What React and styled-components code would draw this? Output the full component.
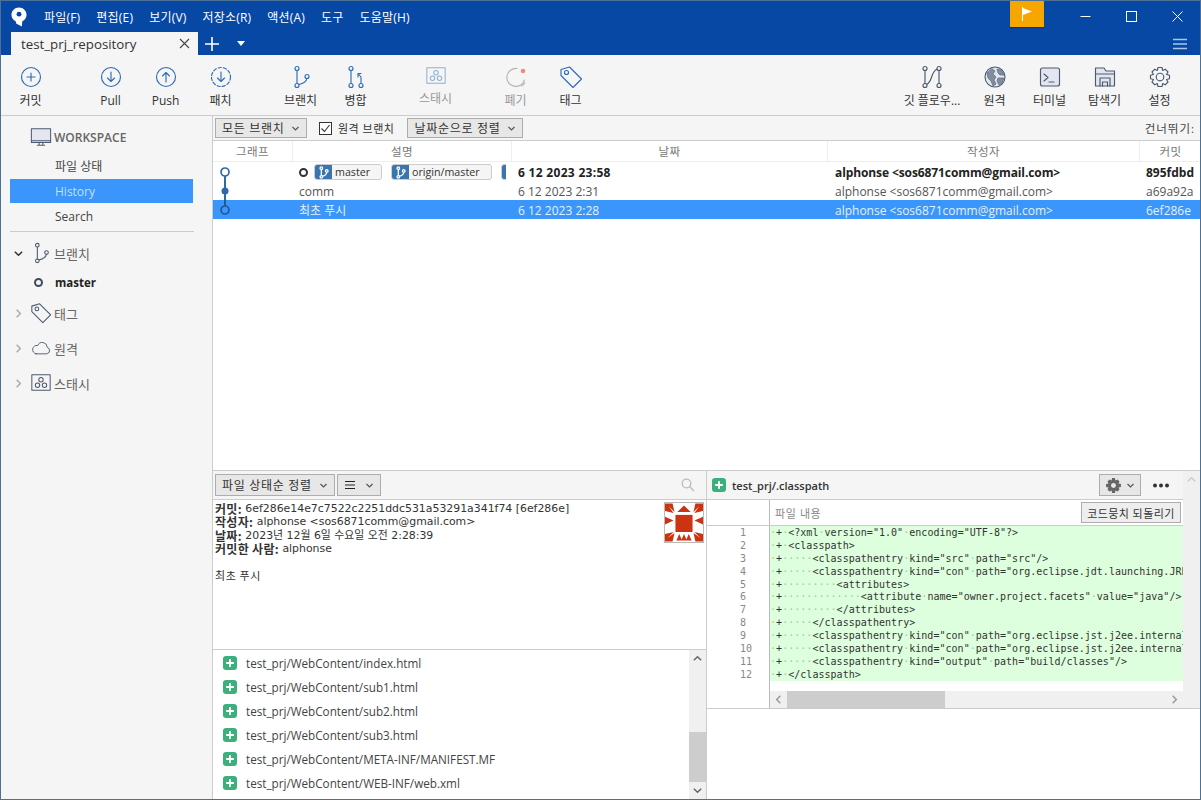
import React from 'react';
import styled, { createGlobalStyle } from 'styled-components';

const Global = createGlobalStyle`
  html, body { margin: 0; padding: 0; overflow: hidden; background: #fff; }
  * { box-sizing: border-box; }
  body {
    font-family: "Open Sans", "Noto Sans CJK KR", sans-serif;
    font-size: 12px;
    color: #333;
  }
`;

const blue = '#2f6db5';
const slate = '#4b5a70';
const pale = '#e3e6ee';

const Window = styled.div`
  width: 1201px;
  height: 800px;
  border: 1px solid #4c7096;
  display: flex;
  flex-direction: column;
  overflow: hidden;
  background: #f5f5f5;
`;

const TitleBar = styled.div`
  background: #0848a5;
  height: 54px;
  flex: none;
  display: flex;
  flex-direction: column;
`;

const MenuRow = styled.div`
  height: 31px;
  display: flex;
  align-items: center;
  padding-left: 10px;
`;

const Logo = styled.svg`
  width: 16px;
  height: 20px;
  margin-right: 17px;
`;

const Menu = styled.div`
  display: flex;
  gap: 16px;
  color: #fff;
  font-size: 12px;
  letter-spacing: .2px;
`;

const FlagBox = styled.div`
  width: 34px;
  height: 26px;
  margin-left: auto;
  margin-right: 18px;
  margin-top: -5px;
  background: #f7a600;
  display: flex;
  align-items: center;
  justify-content: center;
  box-shadow: 0 1px 1px rgba(0,0,0,.3);
`;

const WinBtns = styled.div`
  display: flex;
  width: 138px;
`;

const WinBtn = styled.div`
  width: 46px;
  height: 31px;
  display: flex;
  align-items: center;
  justify-content: center;
`;

const TabRow = styled.div`
  height: 23px;
  display: flex;
  align-items: stretch;
  padding-left: 10px;
`;

const Tab = styled.div`
  width: 187px;
  background: #f5f5f5;
  display: flex;
  align-items: center;
  justify-content: space-between;
  padding: 0 8px 0 10px;
  font-size: 13.3px;
  color: #333;
`;

const TabTool = styled.div`
  display: flex;
  align-items: center;
  justify-content: center;
  width: ${p => p.$w}px;
`;

const Hamburger = styled.div`
  margin-left: auto;
  display: flex;
  align-items: center;
  padding-right: 13px;
`;

const Toolbar = styled.div`
  height: 61px;
  flex: none;
  display: flex;
  border-bottom: 1px solid #ccc;
  padding-left: 2px;
  padding-right: 13px;
`;

const ToolItem = styled.div`
  width: ${p => p.$w || 55}px;
  margin-left: ${p => p.$ml || 0}px;
  display: flex;
  flex-direction: column;
  align-items: center;
  padding-top: 10px;
  color: ${p => (p.$off ? '#999' : '#333')};
  font-size: 12px;
  white-space: nowrap;
  svg { display: block; }
  span { margin-top: 4px; line-height: 16px; }
`;

const Spacer = styled.div`
  flex: 1;
`;

const Body = styled.div`
  flex: 1;
  display: flex;
  min-height: 0;
`;

const Sidebar = styled.div`
  width: 212px;
  flex: none;
  border-right: 1px solid #ccc;
  padding: 9px 17px 0 9px;
  background: #f5f5f5;
`;

const SectionHead = styled.div`
  height: 24px;
  margin-top: ${p => p.$mt || 0}px;
  margin-bottom: ${p => p.$mb || 0}px;
  display: flex;
  align-items: center;
  color: #666;
  font-size: ${p => p.$fs || 13}px;
  font-weight: ${p => p.$fw || 400};
`;

const Arrow = styled.div`
  width: 20px;
  flex: none;
  display: flex;
  justify-content: center;
  margin-left: -2px;
`;

const HeadIcon = styled.div`
  width: 26px;
  flex: none;
  display: flex;
  justify-content: center;
`;

const NavItem = styled.div`
  height: 24px;
  margin-bottom: 1px;
  margin-right: 2px;
  padding-left: 45px;
  display: flex;
  align-items: center;
  font-size: 12px;
  background: ${p => (p.$on ? '#3a96fb' : 'transparent')};
  color: ${p => (p.$on ? '#c5def8' : '#444')};
`;

const SideRule = styled.div`
  height: 1px;
  margin-top: 3px;
  margin-right: 1px;
  background: #ccc;
`;

const BranchItem = styled.div`
  height: 24px;
  margin-top: 5px;
  display: flex;
  align-items: center;
  padding-left: 24px;
  font-weight: 700;
  color: #222;
  font-size: 11.5px;
  gap: 12px;
`;

const Ring = styled.i`
  display: block;
  width: ${p => p.$s || 9}px;
  height: ${p => p.$s || 9}px;
  margin-right: ${p => p.$mr || 0}px;
  border-radius: 50%;
  border: 2px solid ${p => p.$c || '#3f4a5c'};
  background: transparent;
  flex: none;
`;

const Main = styled.div`
  flex: 1;
  min-width: 0;
  display: flex;
  flex-direction: column;
`;

const TopPanel = styled.div`
  height: 354px;
  flex: none;
  background: #fff;
  display: flex;
  flex-direction: column;
`;

const FilterBar = styled.div`
  height: 25px;
  flex: none;
  background: #f5f5f5;
  border-bottom: 1px solid #ccc;
  display: flex;
  align-items: center;
  padding: 0 5px 0 2px;
`;

const Drop = styled.div`
  height: ${p => p.$h || 20}px;
  width: ${p => p.$w}px;
  border: 1px solid #adadad;
  background: #e7e7e7;
  display: flex;
  align-items: center;
  justify-content: space-between;
  padding: 0 6px;
  font-size: 12px;
  letter-spacing: .7px;
  color: #333;
  white-space: nowrap;
`;

const CheckLabel = styled.label`
  display: flex;
  align-items: center;
  margin-left: 12px;
  margin-right: 13px;
  gap: 6px;
  font-size: 11px;
  letter-spacing: .5px;
`;

const CheckBox = styled.div`
  width: 13px;
  height: 13px;
  border: 1px solid #333;
  background: #fff;
  display: flex;
  align-items: center;
  justify-content: center;
`;

const SkipLabel = styled.div`
  margin-left: auto;
  font-size: 11.5px;
  letter-spacing: 1px;
  color: #444;
`;

const Columns = '80px 219px 316px 312px 61px';

const HeaderRow = styled.div`
  display: grid;
  grid-template-columns: ${Columns};
  height: 21px;
  flex: none;
  border-bottom: 1px solid #eee;
`;

const HeaderCell = styled.div`
  display: flex;
  align-items: center;
  justify-content: center;
  border-right: 1px solid #eee;
  color: #777;
  font-size: 11.5px;
  letter-spacing: .5px;
  &:last-child { border-right: 0; }
`;

const CommitRow = styled.div`
  display: grid;
  grid-template-columns: ${Columns};
  height: 19px;
  flex: none;
  align-items: center;
  font-size: 12px;
  font-weight: ${p => (p.$bold ? 700 : 400)};
  background: ${p => (p.$sel ? '#3a96fb' : 'transparent')};
  color: ${p => (p.$sel ? '#e4f0fd' : p.$bold ? '#222' : '#555')};
`;

const GraphCell = styled.svg`
  display: block;
  width: 80px;
  height: 19px;
`;

const DescCell = styled.div`
  display: flex;
  align-items: center;
  overflow: hidden;
  height: 19px;
  padding-left: 6px;
  padding-top: 1px;
  margin-right: 6px;
  white-space: nowrap;
`;

const Chip = styled.div`
  height: 16px;
  width: ${p => p.$w}px;
  margin-left: ${p => p.$ml || 0}px;
  flex: none;
  display: flex;
  align-items: center;
  border: 1px solid #ccc;
  border-radius: 3px;
  background: #f5f5f5;
  overflow: hidden;
  font-size: 10.7px;
  font-weight: 400;
  color: #333;
`;

const ChipIcon = styled.div`
  width: 18px;
  height: 16px;
  margin-left: -1px;
  background: #3a75b0;
  display: flex;
  align-items: center;
  justify-content: center;
  flex: none;
  margin-right: 3px;
`;

const TextCell = styled.div`
  padding-left: ${p => p.$pl || 6}px;
  padding-top: 1px;
  letter-spacing: ${p => p.$ls || 0}px;
  white-space: nowrap;
  overflow: hidden;
`;

const BottomPanel = styled.div`
  flex: 1;
  min-height: 0;
  display: flex;
  border-top: 1px solid #ccc;
`;

const LeftPane = styled.div`
  width: 494px;
  flex: none;
  border-right: 1px solid #ccc;
  display: flex;
  flex-direction: column;
  background: #fff;
`;

const PaneBar = styled.div`
  height: 29px;
  flex: none;
  display: flex;
  align-items: center;
  padding: 0 11px 0 2px;
  gap: 2px;
  background: #f5f5f5;
  border-bottom: 1px solid #ccc;
`;

const SearchIcon = styled.div`
  margin-left: auto;
  display: flex;
`;

const Details = styled.div`
  height: 150px;
  flex: none;
  border-bottom: 1px solid #ccc;
  padding: 2px 2px 0 2px;
  display: flex;
  justify-content: space-between;
  align-items: flex-start;
  font-family: "DejaVu Sans", "Noto Sans CJK KR", sans-serif;
  font-size: 10.9px;
  color: #333;
`;

const DetailLine = styled.div`
  height: 13.4px;
  line-height: 13.4px;
  white-space: nowrap;
  b {
    display: inline-block;
    height: 13.4px;
    line-height: 13.4px;
    vertical-align: top;
    font-weight: 700;
    font-family: "Noto Sans CJK KR", sans-serif;
    font-size: 12px;
    letter-spacing: .3px;
  }
`;

const DetailMsg = styled.div`
  margin-top: 13.4px;
  line-height: 13.4px;
  font-family: "Noto Sans CJK KR", sans-serif;
  font-size: 11px;
  letter-spacing: .6px;
`;

const Avatar = styled.svg`
  display: block;
  width: 40px;
  height: 41px;
  flex: none;
  border: 1px solid #bbb;
`;

const FileArea = styled.div`
  flex: 1;
  min-height: 0;
  display: flex;
`;

const FileList = styled.div`
  flex: 1;
  padding-top: 1px;
`;

const FileRow = styled.div`
  height: 24px;
  display: flex;
  align-items: center;
  padding-left: 10px;
  gap: 9px;
  font-size: 11.7px;
  color: #444;
`;

const AddIcon = styled.svg`
  display: block;
  width: 14px;
  height: 14px;
  flex: none;
`;

const VBar = styled.div`
  width: 17px;
  flex: none;
  background: #f0f0f0;
  display: flex;
  flex-direction: column;
  align-items: center;
`;

const VArrow = styled.div`
  height: 17px;
  flex: none;
  display: flex;
  align-items: center;
  justify-content: center;
`;

const VTrack = styled.div`
  flex: 1;
  width: 100%;
  display: flex;
  flex-direction: column;
  justify-content: flex-end;
`;

const VThumb = styled.div`
  height: 50px;
  background: #cdcdcd;
`;

const RightPane = styled.div`
  flex: 1;
  min-width: 0;
  display: flex;
  flex-direction: column;
  background: #fff;
`;

const DiffBlock = styled.div`
  height: 238px;
  flex: none;
  border-bottom: 1px solid #ccc;
  display: flex;
`;

const DiffMain = styled.div`
  flex: 1;
  min-width: 0;
  display: flex;
  flex-direction: column;
`;

const DiffHead = styled.div`
  height: 29px;
  flex: none;
  display: flex;
  align-items: center;
  padding-left: 5px;
  background: #f5f5f5;
  border-bottom: 1px solid #ccc;
  font-weight: 600;
  font-size: 11px;
  color: #333;
  gap: 6px;
`;

const HeadTools = styled.div`
  margin-left: auto;
  display: flex;
  align-items: center;
  margin-right: 13px;
  gap: 11px;
`;

const GearBtn = styled.div`
  width: 42px;
  height: 22px;
  border: 1px solid #adadad;
  background: #e7e7e7;
  display: flex;
  align-items: center;
  justify-content: center;
  gap: 4px;
`;

const HunkRow = styled.div`
  height: 26px;
  flex: none;
  display: flex;
  align-items: center;
  justify-content: space-between;
  padding-right: 2px;
  border-bottom: 1px solid #ccc;
`;

const HunkTitle = styled.div`
  margin-left: 62px;
  padding-left: 5px;
  height: 100%;
  flex: 1;
  display: flex;
  align-items: center;
  border-left: 1px solid #bbb;
  color: #888;
  font-size: 11px;
  letter-spacing: .6px;
`;

const HunkBtn = styled.div`
  width: 100px;
  height: 21px;
  border: 1px solid #adadad;
  background: #eee;
  display: flex;
  align-items: center;
  justify-content: center;
  font-size: 11px;
  letter-spacing: .4px;
`;

const CodeArea = styled.div`
  flex: 1;
  min-height: 0;
  display: flex;
  font-family: "DejaVu Sans Mono", "Liberation Mono", monospace;
  font-size: 10px;
`;

const Gutter = styled.div`
  width: 63px;
  flex: none;
  border-right: 1px solid #bbb;
  padding: 0 0 0 33px;
  color: #888;
`;

const GutterNum = styled.div`
  height: 12.9px;
  line-height: 13px;
`;

const CodeCol = styled.div`
  flex: 1;
  min-width: 0;
  display: flex;
  flex-direction: column;
  overflow: hidden;
`;

const CodeLines = styled.div`
  flex: 1;
`;

const CodeLine = styled.div`
  height: 12.9px;
  line-height: 13px;
  background: #ddffdd;
  white-space: pre;
  overflow: hidden;
  letter-spacing: .03px;
  color: #333;
`;

const Dot = styled.span`
  color: #9fc99f;
`;

const HBar = styled.div`
  height: 17px;
  flex: none;
  background: #f0f0f0;
  display: flex;
  align-items: center;
`;

const HArrow = styled.div`
  width: 17px;
  flex: none;
  display: flex;
  justify-content: center;
`;

const HThumb = styled.div`
  width: 158px;
  height: 17px;
  background: #cdcdcd;
`;

const PaneFill = styled.div`
  flex: 1;
`;

const Icon = ({ size = 24, children, color = blue, sw = 1.15 }) => (
  <svg width={size} height={size} viewBox="0 0 24 24" fill="none" stroke={color} strokeWidth={sw} strokeLinecap="round" strokeLinejoin="round">
    {children}
  </svg>
);

const Chev = ({ dir = 'down', color = '#555', s = 9 }) => {
  const d = {
    down: 'M1.5 3 L4.5 6 L7.5 3',
    up: 'M1.5 6 L4.5 3 L7.5 6',
    right: 'M3 1.5 L6 4.5 L3 7.5',
    left: 'M6 1.5 L3 4.5 L6 7.5',
  }[dir];
  return (
    <svg width={s} height={s} viewBox="0 0 9 9" fill="none" stroke={color} strokeWidth="1.2">
      <path d={d} />
    </svg>
  );
};

const BranchGlyph = ({ color = blue, size = 24 }) => (
  <Icon size={size} color={color}>
    <circle cx="8" cy="3.5" r="2" />
    <circle cx="8" cy="20.5" r="2" />
    <circle cx="18" cy="11.5" r="2" />
    <path d="M8 5.5V18.5M9.8 19.5C14 18.5 17.5 17 17.8 13.5" />
  </Icon>
);

const TagGlyph = ({ color = blue, size = 24 }) => (
  <Icon size={size} color={color}>
    <path d="M2 4.5 L10.5 2 L22.5 14 L14 22.5 L2 10.5 Z" />
    <circle cx="7.5" cy="7.5" r="2" />
  </Icon>
);

const StashGlyph = ({ color = slate, size = 22 }) => (
  <Icon size={size} color={color} sw={1.1}>
    <rect x="2" y="3" width="20" height="17" />
    <circle cx="12" cy="8.5" r="2.4" />
    <circle cx="8.2" cy="14.5" r="2.4" />
    <circle cx="15.8" cy="14.5" r="2.4" />
  </Icon>
);

const AddBadge = () => (
  <AddIcon viewBox="0 0 14 14">
    <rect width="14" height="14" rx="3" fill="#3cb07c" />
    <path d="M7 3.2V10.8M3.2 7H10.8" stroke="#fff" strokeWidth="2" />
  </AddIcon>
);

const ChipBranch = () => (
  <svg width="13" height="13" viewBox="0 0 24 24" fill="none" stroke="#fff" strokeWidth="2.4">
    <circle cx="8" cy="4" r="2.4" />
    <circle cx="8" cy="20" r="2.4" />
    <circle cx="18" cy="9" r="2.4" />
    <path d="M8 6.5V17.5M10 18.5C15 18 17.5 15 18 11.5" />
  </svg>
);

const CommitGraph = ({ top, bottom, kind, line }) => (
  <GraphCell viewBox="0 0 80 19">
    {top && <path d="M12 0V10" stroke={line} strokeWidth="2" />}
    {bottom && <path d="M12 10V19" stroke={line} strokeWidth="2" />}
    {kind === 'dot' ? (
      <circle cx="12" cy="10" r="3.5" fill="#2f6aa8" />
    ) : (
      <circle cx="12" cy="10" r="4" fill={kind === 'sel' ? '#3a96fb' : '#fff'} stroke={kind === 'sel' ? '#1e5a96' : '#2f6aa8'} strokeWidth="1.7" />
    )}
  </GraphCell>
);

const menus = ['파일(F)', '편집(E)', '보기(V)', '저장소(R)', '액션(A)', '도구', '도움말(H)'];
const headers = ['그래프', '설명', '날짜', '작성자', '커밋'];
const author = 'alphonse <sos6871comm@gmail.com>';
const files = ['index.html', 'sub1.html', 'sub2.html', 'sub3.html', 'META-INF/MANIFEST.MF', 'WEB-INF/web.xml'];

const codeLines = [
  '·+·<?xml·version="1.0"·encoding="UTF-8"?>',
  '·+·<classpath>',
  '·+·····<classpathentry·kind="src"·path="src"/>',
  '·+·····<classpathentry·kind="con"·path="org.eclipse.jdt.launching.JRE_CONTAINER',
  '·+·········<attributes>',
  '·+·············<attribute·name="owner.project.facets"·value="java"/>',
  '·+·········</attributes>',
  '·+·····</classpathentry>',
  '·+·····<classpathentry·kind="con"·path="org.eclipse.jst.j2ee.internal.web.container',
  '·+·····<classpathentry·kind="con"·path="org.eclipse.jst.j2ee.internal.module.container',
  '·+·····<classpathentry·kind="output"·path="build/classes"/>',
  '·+·</classpath>',
];

const renderCode = line =>
  line.split(/(·+)/).map((part, i) => (part.startsWith('·') ? <Dot key={i}>{part}</Dot> : part));

export default function App() {
  return (
    <Window>
      <Global />
      <TitleBar>
        <MenuRow>
          <Logo viewBox="0 0 17 21">
            <path d="M8.5 0.5 C13 0.5 16.5 4 16.5 8.3 C16.5 11.5 14.5 13.8 12 15 L11.5 20.5 L5.5 17.5 L5 15 C2.5 13.8 0.5 11.5 0.5 8.3 C0.5 4 4 0.5 8.5 0.5 Z" fill="#fff" />
            <circle cx="8.5" cy="7.5" r="2.6" fill="#0848a5" />
          </Logo>
          <Menu>
            {menus.map(m => <span key={m}>{m}</span>)}
          </Menu>
          <FlagBox>
            <svg width="12" height="16" viewBox="0 0 12 16">
              <path d="M1.5 1V15" stroke="#fff" strokeWidth="1" />
              <path d="M2 2 L11 5.5 L2 9 Z" fill="#fff" />
            </svg>
          </FlagBox>
          <WinBtns>
            <WinBtn>
              <svg width="11" height="11" viewBox="0 0 11 11"><path d="M0.5 5.5H10.5" stroke="#fff" /></svg>
            </WinBtn>
            <WinBtn>
              <svg width="11" height="11" viewBox="0 0 11 11"><rect x="0.5" y="0.5" width="10" height="10" fill="none" stroke="#fff" /></svg>
            </WinBtn>
            <WinBtn>
              <svg width="11" height="11" viewBox="0 0 11 11"><path d="M0.5 0.5L10.5 10.5M10.5 0.5L0.5 10.5" stroke="#fff" /></svg>
            </WinBtn>
          </WinBtns>
        </MenuRow>
        <TabRow>
          <Tab>
            test_prj_repository
            <svg width="11" height="11" viewBox="0 0 11 11"><path d="M1 1L10 10M10 1L1 10" stroke="#444" strokeWidth="1.1" /></svg>
          </Tab>
          <TabTool $w={28}>
            <svg width="14" height="14" viewBox="0 0 14 14"><path d="M7 0V14M0 7H14" stroke="#fff" strokeWidth="1.6" /></svg>
          </TabTool>
          <TabTool $w={30}>
            <svg width="8" height="5" viewBox="0 0 8 5"><path d="M0 0H8L4 5Z" fill="#fff" /></svg>
          </TabTool>
          <Hamburger>
            <svg width="14" height="12" viewBox="0 0 14 12"><path d="M0 1.5H14M0 6H14M0 10.5H14" stroke="#a9c6e8" strokeWidth="1.6" /></svg>
          </Hamburger>
        </TabRow>
      </TitleBar>

      <Toolbar>
        <ToolItem>
          <Icon><circle cx="12" cy="12" r="9.5" /><path d="M12 8V16M8 12H16" /></Icon>
          <span>커밋</span>
        </ToolItem>
        <ToolItem $ml={25}>
          <Icon><circle cx="12" cy="12" r="9.5" /><path d="M12 7V16.5M8.5 13L12 16.5L15.5 13" /></Icon>
          <span>Pull</span>
        </ToolItem>
        <ToolItem>
          <Icon><circle cx="12" cy="12" r="9.5" /><path d="M12 17V7.5M8.5 11L12 7.5L15.5 11" /></Icon>
          <span>Push</span>
        </ToolItem>
        <ToolItem>
          <Icon><circle cx="12" cy="12" r="9.5" strokeDasharray="3.2 2" /><path d="M12 7V16.5M8.5 13L12 16.5L15.5 13" /></Icon>
          <span>패치</span>
        </ToolItem>
        <ToolItem $ml={25}>
          <BranchGlyph />
          <span>브랜치</span>
        </ToolItem>
        <ToolItem>
          <Icon>
            <circle cx="7" cy="3.5" r="2" />
            <circle cx="7" cy="20.5" r="2" />
            <circle cx="17" cy="20.5" r="2" />
            <path d="M7 5.5V18.5M17 18.5V12L14 8.5M14 12V8.5H17" />
          </Icon>
          <span>병합</span>
        </ToolItem>
        <ToolItem $ml={25} $off>
          <StashGlyph color="#8fb0d0" />
          <span>스태시</span>
        </ToolItem>
        <ToolItem $ml={25} $off>
          <Icon color="#b5b5b5">
            <path d="M13 3.5A9 9 0 1 0 20.5 15" />
            <path d="M17.5 21L21 18" />
            <circle cx="19" cy="6" r="2.3" fill="#f08a78" stroke="none" />
          </Icon>
          <span>폐기</span>
        </ToolItem>
        <ToolItem>
          <TagGlyph />
          <span>태그</span>
        </ToolItem>
        <Spacer />
        <ToolItem $w={70}>
          <Icon color={slate}>
            <circle cx="5" cy="3.5" r="2" />
            <circle cx="5" cy="20.5" r="2" />
            <circle cx="19" cy="3.5" r="2" />
            <circle cx="19" cy="20.5" r="2" />
            <path d="M5 5.5V18.5M19 5.5V18.5M6.5 19.5C13 17 10.5 6 17.2 4.2" />
          </Icon>
          <span>깃 플로우...</span>
        </ToolItem>
        <ToolItem>
          <svg width="24" height="24" viewBox="0 0 24 24">
            <circle cx="12" cy="12" r="10" fill={pale} stroke={slate} strokeWidth="1.1" />
            <path d="M4 8 L9 3.5 L12 6 L10 9 L13 12 L11 15 L13 19 L10 21 L8 16 L5 13 Z M14 4 L18 5 L21 10 L17 10 L15 8 Z M15 13 L21 13 L19 18 L16 20 L14 16 Z" fill="#838da0" stroke={slate} strokeWidth=".6" />
          </svg>
          <span>원격</span>
        </ToolItem>
        <ToolItem>
          <Icon color={slate}>
            <rect x="2.5" y="3" width="19" height="18" rx="2" fill={pale} />
            <path d="M6 9L10 12.5L6 16M11 17H16" />
          </Icon>
          <span>터미널</span>
        </ToolItem>
        <ToolItem>
          <Icon color={slate}>
            <path d="M2.5 21V3H11L13 6H21.5V21Z" fill={pale} />
            <path d="M2.5 9H21.5M7 21V13H17V21M9.5 21V17H14.5V21" />
          </Icon>
          <span>탐색기</span>
        </ToolItem>
        <ToolItem>
          <Icon color={slate}>
            <circle cx="12" cy="12" r="3.8" />
            <path d="M10 2.5H14L14.7 5.5L17.2 4.2L20 7L18.5 9.5L21.5 10.2V13.8L18.5 14.5L20 17L17.2 19.8L14.7 18.5L14 21.5H10L9.3 18.5L6.8 19.8L4 17L5.5 14.5L2.5 13.8V10.2L5.5 9.5L4 7L6.8 4.2L9.3 5.5Z" />
          </Icon>
          <span>설정</span>
        </ToolItem>
      </Toolbar>

      <Body>
        <Sidebar>
          <SectionHead $mb={5} $fs={12} $fw={600}>
            <Arrow />
            <HeadIcon>
              <Icon size={22} color={slate} sw={1.1}>
                <rect x="1.5" y="3" width="21" height="15" fill={pale} />
                <path d="M1.5 16H22.5M8 21H16M10 18V21M14 18V21" />
              </Icon>
            </HeadIcon>
            WORKSPACE
          </SectionHead>
          <NavItem>파일 상태</NavItem>
          <NavItem $on>History</NavItem>
          <NavItem>Search</NavItem>
          <SideRule />

          <SectionHead $mt={9}>
            <Arrow><Chev color="#333" s={11} /></Arrow>
            <HeadIcon><BranchGlyph color={slate} size={22} /></HeadIcon>
            브랜치
          </SectionHead>
          <BranchItem>
            <Ring />
            master
          </BranchItem>
          <SectionHead $mt={7}>
            <Arrow><Chev dir="right" color="#aaa" s={11} /></Arrow>
            <HeadIcon><TagGlyph color={slate} size={22} /></HeadIcon>
            태그
          </SectionHead>
          <SectionHead $mt={11}>
            <Arrow><Chev dir="right" color="#aaa" s={11} /></Arrow>
            <HeadIcon>
              <Icon size={20} color={slate} sw={1.1}>
                <path d="M6 19H18.5A4 4 0 0 0 19.5 11.2A6 6 0 0 0 8 9A5 5 0 0 0 6 19Z" />
              </Icon>
            </HeadIcon>
            원격
          </SectionHead>
          <SectionHead $mt={11}>
            <Arrow><Chev dir="right" color="#aaa" s={11} /></Arrow>
            <HeadIcon><StashGlyph size={22} /></HeadIcon>
            스태시
          </SectionHead>
        </Sidebar>

        <Main>
          <TopPanel>
            <FilterBar>
              <Drop $w={92}>모든 브랜치<Chev /></Drop>
              <CheckLabel>
                <CheckBox>
                  <svg width="11" height="11" viewBox="0 0 11 11"><path d="M1.5 5.5L4.5 8.5L9.5 2" fill="none" stroke="#333" strokeWidth="1.1" /></svg>
                </CheckBox>
                원격 브랜치
              </CheckLabel>
              <Drop $w={116}>날짜순으로 정렬<Chev /></Drop>
              <SkipLabel>건너뛰기:</SkipLabel>
            </FilterBar>
            <HeaderRow>
              {headers.map(h => <HeaderCell key={h}>{h}</HeaderCell>)}
            </HeaderRow>
            <CommitRow $bold>
              <CommitGraph bottom kind="ring" line="#2f6aa8" />
              <DescCell>
                <Ring $c="#333" $mr={6} />
                <Chip $w={68}><ChipIcon><ChipBranch /></ChipIcon>master</Chip>
                <Chip $w={101} $ml={9}><ChipIcon><ChipBranch /></ChipIcon>origin/master</Chip>
                <Chip $w={30} $ml={9}><ChipIcon /></Chip>
              </DescCell>
              <TextCell $ls={0.3}>6 12 2023 23:58</TextCell>
              <TextCell $pl={7} $ls={-0.1}>{author}</TextCell>
              <TextCell>895fdbd</TextCell>
            </CommitRow>
            <CommitRow>
              <CommitGraph top bottom kind="dot" line="#2f6aa8" />
              <DescCell>comm</DescCell>
              <TextCell>6 12 2023 2:31</TextCell>
              <TextCell $pl={7}>{author}</TextCell>
              <TextCell>a69a92a</TextCell>
            </CommitRow>
            <CommitRow $sel>
              <CommitGraph top kind="sel" line="#1e5a96" />
              <DescCell>최초 푸시</DescCell>
              <TextCell>6 12 2023 2:28</TextCell>
              <TextCell $pl={7}>{author}</TextCell>
              <TextCell>6ef286e</TextCell>
            </CommitRow>
          </TopPanel>

          <BottomPanel>
            <LeftPane>
              <PaneBar>
                <Drop $w={120} $h={22}>파일 상태순 정렬<Chev /></Drop>
                <Drop $w={44} $h={22}>
                  <svg width="12" height="10" viewBox="0 0 12 10"><path d="M1 1.5H11M1 5H11M1 8.5H11" stroke="#222" strokeWidth="1" /></svg>
                  <Chev />
                </Drop>
                <SearchIcon>
                  <svg width="14" height="14" viewBox="0 0 14 14" fill="none" stroke="#bbb" strokeWidth="1.3">
                    <circle cx="5.5" cy="5.5" r="4.3" />
                    <path d="M8.8 8.8L13 13" />
                  </svg>
                </SearchIcon>
              </PaneBar>
              <Details>
                <div>
                  <DetailLine><b>커밋:</b> 6ef286e14e7c7522c2251ddc531a53291a341f74 [6ef286e]</DetailLine>
                  <DetailLine><b>작성자:</b> {author}</DetailLine>
                  <DetailLine><b>날짜:</b> 2023년 12월 6일 수요일 오전 2:28:39</DetailLine>
                  <DetailLine><b>커밋한 사람:</b> alphonse</DetailLine>
                  <DetailMsg>최초 푸시</DetailMsg>
                </div>
                <Avatar viewBox="0 0 40 40">
                  <rect width="40" height="40" fill="#fff" />
                  <rect x="11" y="12" width="18" height="18" fill="#cc3311" />
                  <path fill="#cc3311" d="M0 0H8L10 9L4 3L9 10L0 8Z M40 0H32L30 9L36 3L31 10L40 8Z M13 9L20 2L27 9Z M0 14L9 18L0 22Z M40 14L31 18L40 22Z M0 40V32L9 30L3 36L10 31L8 40Z M40 40V32L31 30L37 36L30 31L32 40Z M12 39L15 32L18 39Z M17 39L20 32L23 39Z M22 39L25 32L28 39Z" />
                </Avatar>
              </Details>
              <FileArea>
                <FileList>
                  {files.map(f => (
                    <FileRow key={f}><AddBadge />test_prj/WebContent/{f}</FileRow>
                  ))}
                </FileList>
                <VBar>
                  <VArrow><Chev dir="up" color="#666" s={11} /></VArrow>
                  <VTrack><VThumb /></VTrack>
                  <VArrow><Chev color="#666" s={11} /></VArrow>
                </VBar>
              </FileArea>
            </LeftPane>

            <RightPane>
              <DiffBlock>
                <DiffMain>
                  <DiffHead>
                    <AddBadge />
                    test_prj/.classpath
                    <HeadTools>
                      <GearBtn>
                        <svg width="17" height="17" viewBox="0 0 24 24" fill="#666" fillRule="evenodd">
                          <path d="M10 1.5H14L14.7 5L17.7 3.5L20.5 6.3L19 9.3L22.5 10V14L19 14.7L20.5 17.7L17.7 20.5L14.7 19L14 22.5H10L9.3 19L6.3 20.5L3.5 17.7L5 14.7L1.5 14V10L5 9.3L3.5 6.3L6.3 3.5L9.3 5ZM12 8.5A3.5 3.5 0 1 0 12 15.5A3.5 3.5 0 1 0 12 8.5Z" />
                        </svg>
                        <Chev />
                      </GearBtn>
                      <svg width="18" height="5" viewBox="0 0 18 5" fill="#333">
                        <circle cx="3" cy="2.5" r="2" /><circle cx="9" cy="2.5" r="2" /><circle cx="15" cy="2.5" r="2" />
                      </svg>
                    </HeadTools>
                  </DiffHead>
                  <HunkRow>
                    <HunkTitle>파일 내용</HunkTitle>
                    <HunkBtn>코드뭉치 되돌리기</HunkBtn>
                  </HunkRow>
                  <CodeArea>
                    <Gutter>
                      {codeLines.map((_, i) => <GutterNum key={i}>{i + 1}</GutterNum>)}
                    </Gutter>
                    <CodeCol>
                      <CodeLines>
                        {codeLines.map((l, i) => <CodeLine key={i}>{renderCode(l)}</CodeLine>)}
                      </CodeLines>
                      <HBar>
                        <HArrow><Chev dir="left" color="#999" s={11} /></HArrow>
                        <HThumb />
                        <Spacer />
                        <HArrow><Chev dir="right" color="#999" s={11} /></HArrow>
                      </HBar>
                    </CodeCol>
                  </CodeArea>
                </DiffMain>
                <VBar>
                  <VArrow><Chev dir="up" color="#ccc" s={11} /></VArrow>
                </VBar>
              </DiffBlock>
              <PaneFill />
            </RightPane>
          </BottomPanel>
        </Main>
      </Body>
    </Window>
  );
}
